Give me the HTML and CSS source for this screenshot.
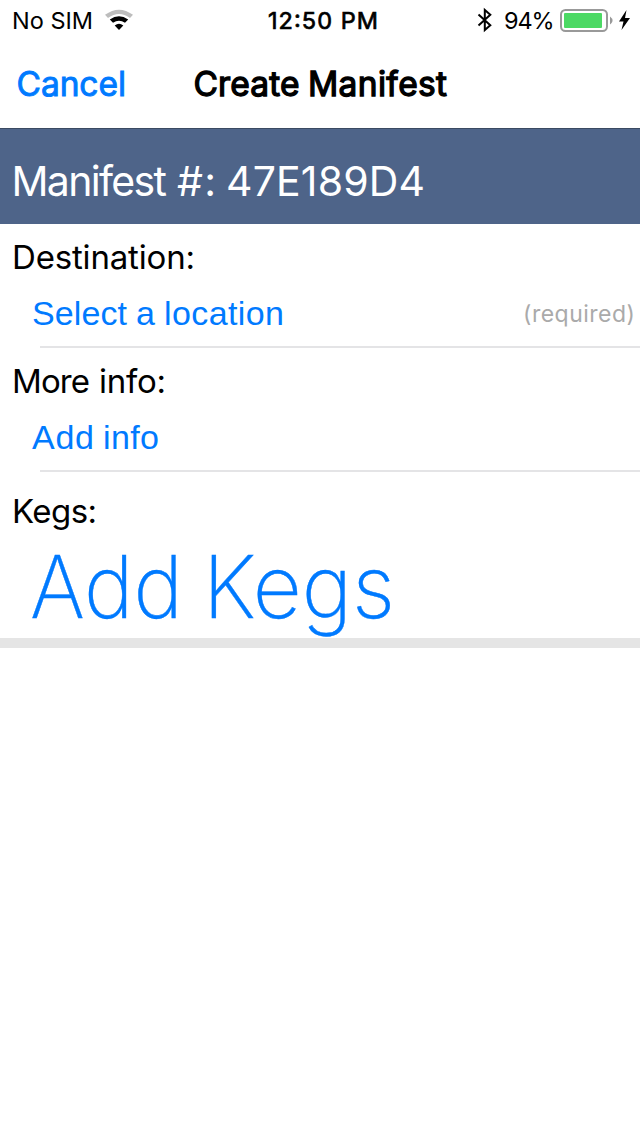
FILE: index.html
```html
<!DOCTYPE html>
<html lang="en">
<head>
<meta charset="utf-8">
<title>Create Manifest</title>
<link rel="stylesheet" href="styles.css">
</head>
<body>
<header class="status">
  <svg class="t" width="82" height="40"><text x="0" y="29" textLength="81">No SIM</text></svg>
  <svg class="wifi" width="28" height="22" viewBox="0 0 28 22">
    <path d="M0 5.800Q14-4.500 28 5.800L25 9Q14 1 3 9Z" fill="#bdbdbd"/>
    <path d="M4.800 10.500Q14 4 23.200 10.500L20 13.800Q14 9.800 8 13.800Z"/>
    <path d="M9.700 16.500Q14 13 18.300 16.500L14 21Z"/>
  </svg>
  <svg class="t clock" width="112" height="40"><text x="0" y="29" textLength="110">12:50 PM</text></svg>
  <svg class="bt" width="16" height="26" viewBox="0 0 16 26"><path d="M1.500 7.500L13.300 18.200L7.800 23V3L13.300 7.800L1.500 18.500" fill="none" stroke="#000" stroke-width="2"/></svg>
  <svg class="t pct" width="52" height="40"><text x="0" y="29" textLength="50.500">94%</text></svg>
  <svg class="battery" width="72" height="24" viewBox="0 0 72 24">
    <rect x="1" y="1" width="46" height="21" rx="4.500" fill="none" stroke="#999" stroke-width="2"/>
    <rect x="4" y="4" width="38" height="15" rx="1" fill="#4cd964"/>
    <path d="M50 7.500Q55 11.500 50 15.500Z" fill="#999"/>
    <path d="M66.500 1L59 12.500H63.500L61.500 21L70 9H65Z"/>
  </svg>
</header>
<nav class="nav">
  <svg class="t cancel" width="112" height="88"><text x="-0.500" y="56" textLength="109.500">Cancel</text></svg>
  <svg class="t title" width="260" height="88"><text x="-0.500" y="56" textLength="106">Create</text><text x="114" y="56" textLength="139">Manifest</text></svg>
</nav>
<section class="banner"><svg class="t" width="420" height="95"><text x="-0.500" y="67" textLength="155.500">Manifest</text><text x="165" y="67" textLength="39">#:</text><text x="214" y="67" textLength="199">47E189D4</text></svg></section>
<main>
  <section class="field">
    <svg class="t label" width="200" height="62"><text x="0" y="45" textLength="183">Destination:</text></svg>
    <div class="row">
      <svg class="t link" width="260" height="60"><text x="0" y="39" textLength="95">Select</text><text x="104" y="39" textLength="19">a</text><text x="132" y="39" textLength="120">location</text></svg>
      <svg class="t required" width="116" height="60"><text x="-1" y="36" textLength="112">(required)</text></svg>
    </div>
  </section>
  <section class="field">
    <svg class="t label" width="200" height="62"><text x="0" y="45" textLength="78">More</text><text x="87" y="45" textLength="67">info:</text></svg>
    <div class="row"><svg class="t link" width="200" height="60"><text x="0" y="39" textLength="62">Add</text><text x="71" y="39" textLength="56">info</text></svg></div>
  </section>
  <section class="kegs">
    <svg class="t label" width="200" height="68"><text x="0" y="51" textLength="85">Kegs:</text></svg>
    <svg class="t big" width="400" height="98"><text x="-2" y="78" textLength="153" lengthAdjust="spacingAndGlyphs">Add</text><text x="171" y="78" textLength="192" lengthAdjust="spacingAndGlyphs">Kegs</text></svg>
  </section>
</main>
</body>
</html>
```
FILE: styles.css
```css
body { margin: 0; height: 1136px; background: #fff; color: #000; font-family: Inter, sans-serif; overflow: hidden; }
svg { display: block; flex: none; }
.t { overflow: visible; fill: currentColor; }
.status { display: flex; height: 40px; font-size: 23.5px; padding-left: 12px; }
.wifi { margin: 9px 0 0 11px; }
.clock { margin-left: 135px; stroke: currentColor; stroke-width: 0.7px; }
.bt { margin: 7px 0 0 97px; }
.pct { margin-left: 11px; }
.battery { margin: 9px 0 0 4px; }
.nav { display: flex; height: 88px; padding-left: 17px; font-size: 33.5px; stroke: currentColor; }
.cancel { color: #007aff; stroke-width: 0.9px; }
.title { margin-left: 65px; stroke-width: 1.3px; }
.banner { box-sizing: border-box; height: 96px; padding-left: 12px; border-top: 1px solid #3b4a62; background: #4e6489; color: #fff; font-size: 41px; }
.field { height: 124px; }
.label { margin-left: 12px; font-size: 33px; }
.row { display: flex; justify-content: space-between; height: 60px; margin-left: 40px; border-bottom: 2px solid #e4e4e6; }
.link { margin-left: -8px; color: #007aff; font: 34px "Liberation Sans", sans-serif; }
.required { color: #aaa; font-size: 23px; }
.kegs { height: 166px; border-bottom: 10px solid #e5e5e5; }
.big { margin-left: 32px; color: #007aff; font-size: 86px; font-weight: 200; stroke: currentColor; stroke-width: 0.4px; }
```
